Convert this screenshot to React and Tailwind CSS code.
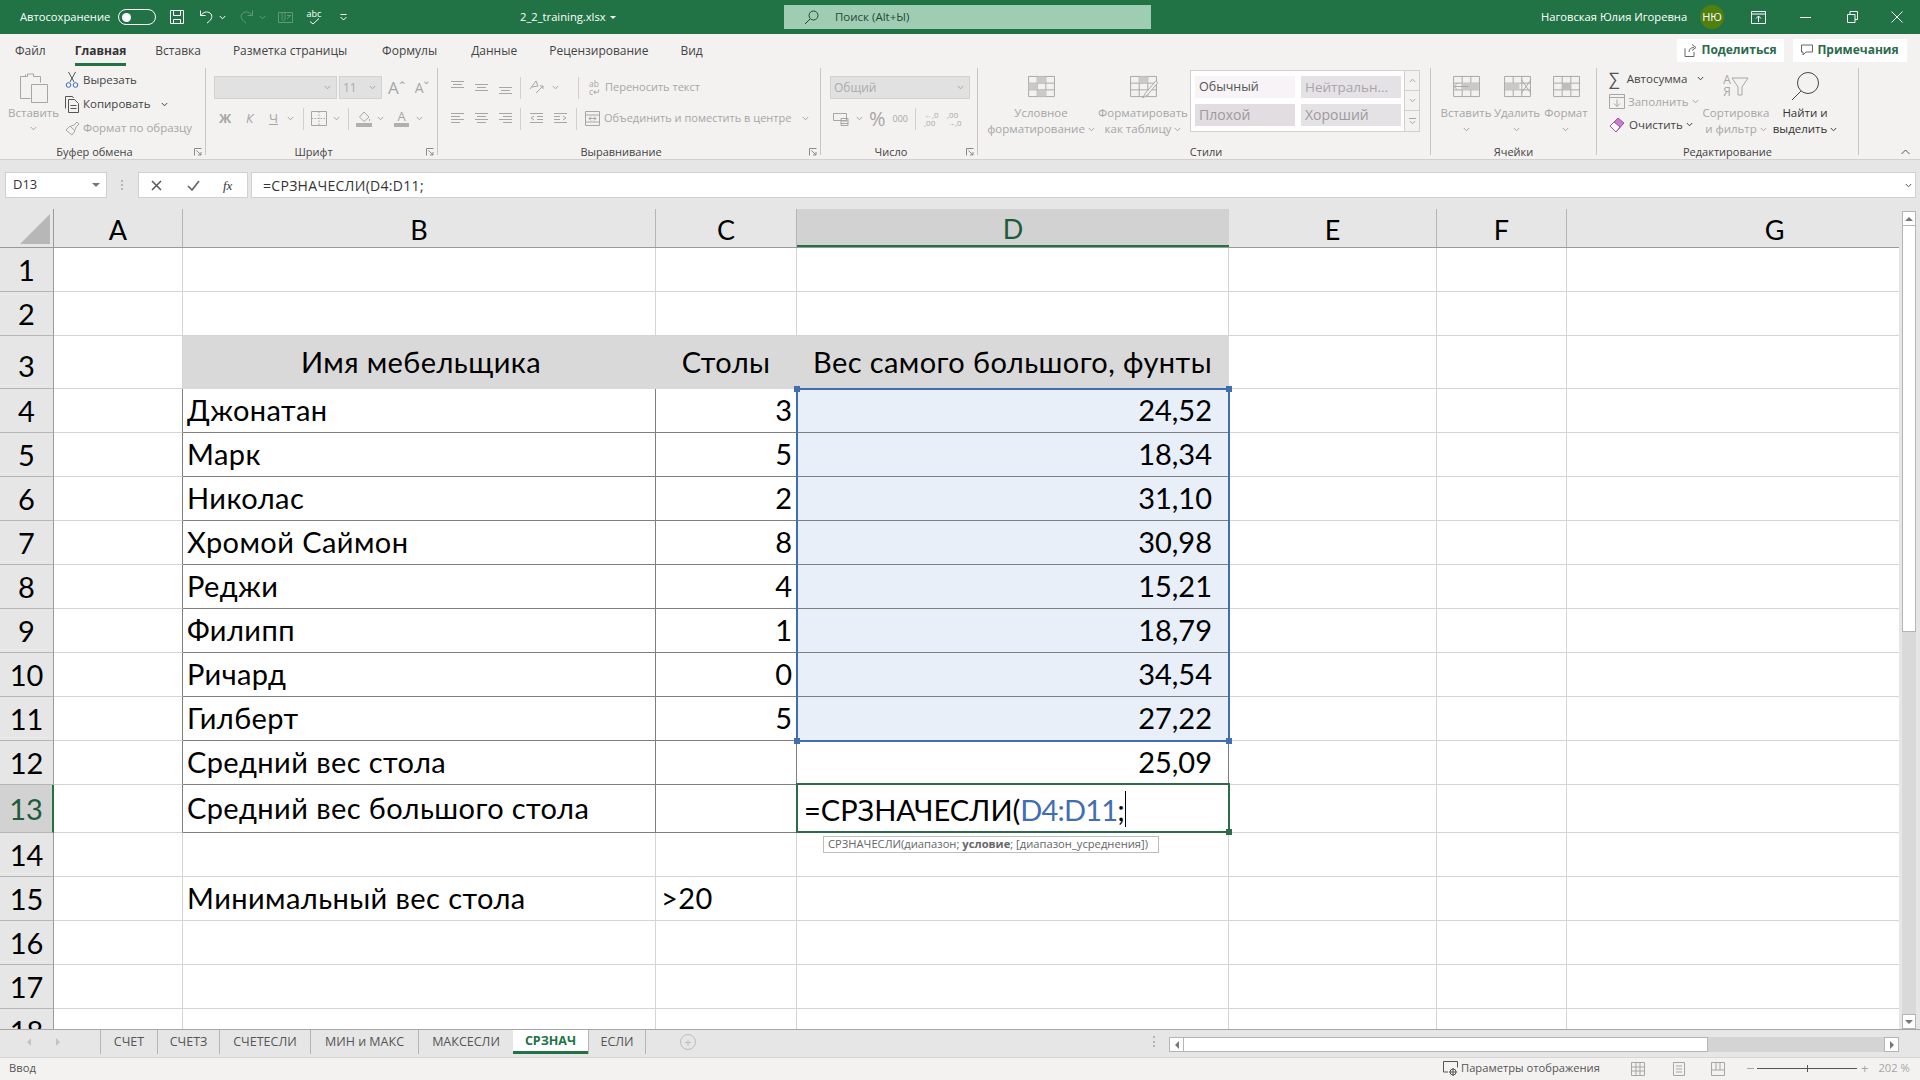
import React from "react";

const tabs = ["Файл", "Главная", "Вставка", "Разметка страницы", "Формулы", "Данные", "Рецензирование", "Вид"];
const tabGaps = ["ml-[15px]", "ml-[29px]", "ml-[29px]", "ml-[32px]", "ml-[35px]", "ml-[34px]", "ml-[32px]", "ml-[32px]"];

const rows = [
  { n: "1", h: "h-[44px]" },
  { n: "2", h: "h-[44px]" },
  { n: "3", h: "h-[53px]", head: true, b: "Имя мебельщика", c: "Столы", d: "Вес самого большого, фунты" },
  { n: "4", h: "h-[44px]", table: true, sel: true, b: "Джонатан", c: "3", d: "24,52" },
  { n: "5", h: "h-[44px]", table: true, sel: true, b: "Марк", c: "5", d: "18,34" },
  { n: "6", h: "h-[44px]", table: true, sel: true, b: "Николас", c: "2", d: "31,10" },
  { n: "7", h: "h-[44px]", table: true, sel: true, b: "Хромой Саймон", c: "8", d: "30,98" },
  { n: "8", h: "h-[44px]", table: true, sel: true, b: "Реджи", c: "4", d: "15,21" },
  { n: "9", h: "h-[44px]", table: true, sel: true, b: "Филипп", c: "1", d: "18,79" },
  { n: "10", h: "h-[44px]", table: true, sel: true, b: "Ричард", c: "0", d: "34,54" },
  { n: "11", h: "h-[44px]", table: true, sel: true, b: "Гилберт", c: "5", d: "27,22" },
  { n: "12", h: "h-[44px]", table: true, b: "Средний вес стола", d: "25,09" },
  { n: "13", h: "h-[48px]", table: true, active: true, b: "Средний вес большого стола" },
  { n: "14", h: "h-[44px]" },
  { n: "15", h: "h-[44px]", b: "Минимальный вес стола", cl: ">20" },
  { n: "16", h: "h-[44px]" },
  { n: "17", h: "h-[44px]" },
  { n: "18", h: "h-[44px]" },
];

const sheetTabs = [
  { t: "СЧЕТ", w: "w-[57px]" },
  { t: "СЧЕТЗ", w: "w-[62px]" },
  { t: "СЧЕТЕСЛИ", w: "w-[91px]" },
  { t: "МИН и МАКС", w: "w-[108px]" },
  { t: "МАКСЕСЛИ", w: "w-[95px]" },
  { t: "СРЗНАЧ", w: "w-[75px]", on: true },
  { t: "ЕСЛИ", w: "w-[57px]" },
];

function Ico({ w = 16, h = 16, vb, stroke = "#a6a6a6", className = "", children }) {
  return (
    <svg width={w} height={h} viewBox={vb || `0 0 ${w} ${h}`} fill="none" stroke={stroke} strokeWidth="1" className={`shrink-0 ${className}`}>
      {children}
    </svg>
  );
}

function Chev({ stroke = "#a6a6a6", className = "" }) {
  return (
    <Ico w={7} h={5} stroke={stroke} className={className}>
      <path d="M.8 1 3.5 3.8 6.2 1" />
    </Ico>
  );
}

function Group({ w, label, launcher, labelClass = "", children }) {
  return (
    <div className={`flex shrink-0 ${w}`}>
      <div className="flex min-w-0 flex-1 flex-col">
        <div className="h-[76px]">{children}</div>
        <div className={`relative h-[16px] text-center text-[11px] leading-[16px] text-[#444] ${labelClass} ${launcher ? "pr-[16px]" : ""}`}>
          {label}
          {launcher && (
            <Ico w={8} h={8} className="absolute right-[3px] top-[4px]" stroke="#8a8a8a">
              <path d="M.5 7.5v-7h7M2.5 2.5l4.5 4.5M7 4v3H4" />
            </Ico>
          )}
        </div>
      </div>
      <div className="h-[87px] w-px bg-[#c8c6c4]" />
    </div>
  );
}

function VSep({ className = "" }) {
  return <div className={`h-[22px] w-px bg-[#d2d0ce] ${className}`} />;
}

function Select({ w, text, className = "" }) {
  return (
    <div className={`flex h-[23px] items-center justify-between border border-[#d2d2d2] bg-[#e1e1e1] pl-[3px] pr-[5px] text-[12px] text-[#ababab] ${w} ${className}`}>
      <span>{text}</span>
      <Chev />
    </div>
  );
}

function AlignIcon({ kind }) {
  const lines = {
    top: "M1 1.5h13M3 4.5h9M1 7.5h13",
    mid: "M1 4.5h13M3 7.5h9M1 10.5h13",
    bot: "M1 7.5h13M3 10.5h9M1 13.5h13",
    left: "M1 2.5h13M1 5.5h9M1 8.5h13M1 11.5h9",
    center: "M1 2.5h13M3 5.5h9M1 8.5h13M3 11.5h9",
    right: "M1 2.5h13M5 5.5h9M1 8.5h13M5 11.5h9",
  };
  return (
    <Ico w={15} h={15}>
      <path d={lines[kind]} />
    </Ico>
  );
}

function GridIcon({ children }) {
  return (
    <Ico w={29} h={23} vb="0 0 30 24">
      <path d="M1.5 1.5h27v21h-27zM1.5 8.5h27M1.5 15.5h27M10.5 1.5v21M19.5 1.5v21" />
      {children}
    </Ico>
  );
}

function BigButton({ className = "", lines, dark, icon, chevBelow }) {
  const c = dark ? "text-[#333]" : "text-[#a6a6a6]";
  return (
    <div className={`flex shrink-0 flex-col items-center ${className}`}>
      <div className="flex h-[26px] items-center justify-center">{icon}</div>
      <div className={`mt-[6px] text-center text-[11.5px] leading-[16px] whitespace-nowrap ${c}`}>
        <div>{lines[0]}</div>
        {lines[1] !== undefined && (
          <div className="flex items-center justify-center gap-[3px]">
            {lines[1]}
            <Chev stroke={dark ? "#444" : "#a6a6a6"} />
          </div>
        )}
        {chevBelow && (
          <div className="flex h-[16px] items-center justify-center">
            <Chev />
          </div>
        )}
      </div>
    </div>
  );
}

function TitleBar() {
  return (
    <div className="flex h-[34px] items-center bg-[#217346] text-[11.2px] text-white">
      <span className="ml-[20px] w-[98px]">Автосохранение</span>
      <div className="flex h-[16px] w-[38px] items-center rounded-full border border-white pl-[3px]">
        <div className="h-[9px] w-[9px] rounded-full bg-white" />
      </div>
      <Ico w={16} h={16} stroke="#fff" className="ml-[13px]">
        <path d="M1.5 1.5h13v13h-13zM4.5 1.5v5h7v-5M4.5 14.5v-4h7v4" />
      </Ico>
      <Ico w={15} h={16} stroke="#fff" className="ml-[14px]">
        <path d="M1.5 1.5v5h5M2 6.5c2-3.5 6-4.5 9-2.5 3 2.3 2.5 6.5-3 10" />
      </Ico>
      <Chev stroke="#fff" className="ml-[5px]" />
      <Ico w={15} h={16} stroke="#5f9b7b" className="ml-[13px]">
        <path d="M13.5 1.5v5h-5M13 6.5c-2-3.5-6-4.5-9-2.5-3 2.3-2.5 6.5 3 10" />
      </Ico>
      <Chev stroke="#5f9b7b" className="ml-[5px]" />
      <Ico w={15} h={14} stroke="#5f9b7b" className="ml-[12px]">
        <path d="M.5 2.5h14v10H.5zM4 2.5v6c0 3 3 3 3 0v-6M9 5.5h4M9 9l4-4" />
      </Ico>
      <div className="ml-[14px] flex w-[14px] flex-col items-center text-[9px] leading-[9px]">
        <span>abc</span>
        <Ico w={11} h={7} stroke="#fff">
          <path d="M1 3.5 4 6l6-5.5" />
        </Ico>
      </div>
      <Ico w={7} h={8} stroke="#fff" className="ml-[19px]">
        <path d="M.5 1.5h6M.5 4l3 3 3-3" />
      </Ico>
      <span className="ml-[173px] w-[84px] whitespace-nowrap">2_2_training.xlsx</span>
      <div className="ml-[6px] h-0 w-0 border-x-[3px] border-t-[3px] border-x-transparent border-t-white" />
      <div className="ml-[168px] flex h-[24px] w-[367px] items-center bg-[#9fcdb3] pl-[20px] text-[11.5px] text-[#1f4a33]">
        <Ico w={15} h={15} stroke="#1f4a33">
          <circle cx="9.5" cy="5.5" r="4.5" />
          <path d="M6 9 1 14" />
        </Ico>
        <span className="ml-[16px]">Поиск (Alt+Ы)</span>
      </div>
      <span className="ml-[390px] w-[148px] whitespace-nowrap">Наговская Юлия Игоревна</span>
      <div className="ml-[11px] flex h-[24px] w-[24px] items-center justify-center rounded-full bg-[#52800f] text-[11px]">НЮ</div>
      <Ico w={15} h={13} stroke="#fff" className="ml-[27px]">
        <path d="M.5 .5h14v12H.5zM.5 3h14M7.5 11V5M5 7.5l2.5-2.5L10 7.5" />
      </Ico>
      <div className="ml-[34px] h-px w-[11px] bg-white" />
      <Ico w={11} h={12} stroke="#fff" className="ml-[36px]">
        <path d="M.5 3.5h7.5v8H.5zM3 3.5V.5h7.5v8H8" />
      </Ico>
      <Ico w={12} h={12} stroke="#fff" className="ml-[33px]">
        <path d="M.5 .5l11 11M11.5 .5l-11 11" />
      </Ico>
    </div>
  );
}

function TabsRow() {
  return (
    <div className="flex h-[34px] items-center text-[12px] text-[#444]">
      {tabs.map((t, i) => (
        <div key={t} className={`relative mt-[-1px] flex h-[29px] items-center whitespace-nowrap ${tabGaps[i]} ${t === "Главная" ? "font-bold text-[#333]" : ""}`}>
          {t}
          {t === "Главная" && <div className="absolute bottom-[-1px] left-0 h-[3px] w-full bg-[#217346]" />}
        </div>
      ))}
      <div className="ml-auto mr-[13px] flex items-center gap-[9px] pb-[2px] font-bold text-[#2b6a4a]">
        <div className="flex h-[23px] w-[107px] items-center justify-center gap-[4px] bg-white">
          <Ico w={13} h={13} stroke="#666">
            <path d="M1 4.5v8h9V8M5 8c0-3 2-4.5 5-4.5M8 .5l4 3-4 3" />
          </Ico>
          Поделиться
        </div>
        <div className="flex h-[23px] w-[114px] items-center justify-center gap-[4px] bg-white">
          <Ico w={12} h={12} stroke="#666">
            <path d="M.5 1h11v7H5L2 11V8H.5z" />
          </Ico>
          Примечания
        </div>
      </div>
    </div>
  );
}

function Ribbon() {
  return (
    <div className="h-[126px] border-b border-[#d0d0d0] bg-[#f3f2f1]">
      <TabsRow />
      <div className="flex text-[11.5px] text-[#a6a6a6]">
        <Group w="w-[206px]" label="Буфер обмена" launcher>
          <div className="flex">
            <div className="flex w-[65px] flex-col items-center pl-[2px] pt-[4px] text-[11.5px]">
              <Ico w={30} h={31}>
                <path d="M1.5 4.5h7V2h6v2.5h7v6M6.5 2.5v2M1.5 4.5v22h10" />
                <path d="M12.5 12.5h16v18h-16z" fill="#f3f2f1" />
              </Ico>
              <span className="mt-[2px] leading-[16px]">Вставить</span>
              <Chev className="mt-[5px]" />
            </div>
            <div className="flex flex-col">
              <div className="flex h-[24px] items-center text-[#444]">
                <Ico w={14} h={18} stroke="#555" className="mr-[4px]">
                  <path d="M3.5 1 9 11M10.5 1 5 11" />
                  <circle cx="3.5" cy="14" r="2.3" stroke="#2f6fb7" />
                  <circle cx="10.5" cy="14" r="2.3" stroke="#2f6fb7" />
                </Ico>
                Вырезать
              </div>
              <div className="flex h-[24px] items-center text-[#444]">
                <Ico w={14} h={17} stroke="#555" className="mr-[4px]">
                  <path d="M.5 12.5v-12h7l1 1.5M3.5 3.5h6l4 4v9h-10zM5.5 9.5h6M5.5 12.5h6" />
                </Ico>
                Копировать
                <Chev stroke="#444" className="ml-[10px]" />
              </div>
              <div className="flex h-[24px] items-center">
                <Ico w={15} h={15} className="mr-[3px]">
                  <path d="M1 9 7 14 10 10 5 5zM6 5l3-1 3-3 2 2-3 3-1 3" />
                </Ico>
                Формат по образцу
              </div>
            </div>
          </div>
        </Group>

        <Group w="w-[232px]" label="Шрифт" launcher>
          <div className="pl-[8px] pt-[8px]">
            <div className="flex h-[23px] items-center">
              <Select w="w-[123px]" text="" />
              <Select w="w-[43px]" text="11" className="ml-[2px]" />
              <span className="ml-[6px] text-[17px] leading-none">Aˆ</span>
              <span className="ml-[9px] text-[14px] leading-none">Aˇ</span>
            </div>
            <div className="mt-[8px] flex h-[23px] items-center pl-[5px] text-[13px]">
              <span className="w-[14px] font-bold">Ж</span>
              <span className="ml-[13px] w-[7px] italic">К</span>
              <span className="ml-[16px] w-[10px] underline">Ч</span>
              <Chev className="ml-[8px]" />
              <VSep className="ml-[9px]" />
              <Ico w={16} h={15} className="ml-[7px]">
                <path d="M.5 .5h15v14H.5z" />
                <path d="M8 .5v14M.5 7.5h15" strokeDasharray="1.5 1.5" />
              </Ico>
              <Chev className="ml-[6px]" />
              <VSep className="ml-[8px]" />
              <div className="ml-[7px] flex w-[16px] flex-col items-center">
                <Ico w={13} h={11}>
                  <path d="M6 1 1.5 6 6 10.5 11 6zM11.5 8v2" />
                </Ico>
                <div className="mt-[1px] h-[4px] w-[16px] bg-[#b0b0b0]" />
              </div>
              <Chev className="ml-[5px]" />
              <div className="ml-[10px] flex w-[15px] flex-col items-center text-[13px] leading-[12px]">
                A
                <div className="mt-[1px] h-[4px] w-[15px] bg-[#b0b0b0]" />
              </div>
              <Chev className="ml-[7px]" />
            </div>
          </div>
        </Group>

        <Group w="w-[383px]" label="Выравнивание" launcher>
          <div className="pl-[12px] pt-[8px] text-[11px]">
            <div className="flex h-[23px] items-center">
              <AlignIcon kind="top" />
              <div className="ml-[9px]"><AlignIcon kind="mid" /></div>
              <div className="ml-[9px]"><AlignIcon kind="bot" /></div>
              <VSep className="ml-[7px]" />
              <Ico w={16} h={15} className="ml-[8px]">
                <path d="M1 9 7 1l2 5-6 1M7 13l7-7M11 6h3v3" />
              </Ico>
              <Chev className="ml-[7px]" />
              <VSep className="ml-[19px]" />
              <div className="ml-[10px] flex w-[13px] flex-col text-[8.5px] leading-[8px]">
                <span>ab</span>
                <span>c↵</span>
              </div>
              <span className="ml-[3px] whitespace-nowrap">Переносить текст</span>
            </div>
            <div className="mt-[8px] flex h-[23px] items-center">
              <AlignIcon kind="left" />
              <div className="ml-[9px]"><AlignIcon kind="center" /></div>
              <div className="ml-[9px]"><AlignIcon kind="right" /></div>
              <VSep className="ml-[7px]" />
              <Ico w={15} h={13} className="ml-[8px]">
                <path d="M1 1.5h13M8 4.5h6M8 7.5h6M1 10.5h13M5 4 2 6l3 2" />
              </Ico>
              <Ico w={15} h={13} className="ml-[9px]">
                <path d="M1 1.5h13M1 4.5h6M1 7.5h6M1 10.5h13M10 4l3 2-3 2" />
              </Ico>
              <VSep className="ml-[8px]" />
              <Ico w={15} h={15} className="ml-[8px]">
                <path d="M.5 .5h14v14H.5zM.5 4h14M.5 11h14M4 7.5h7M4 7.5l2-2M4 7.5l2 2M11 7.5l-2-2M11 7.5l-2 2" />
              </Ico>
              <span className="ml-[4px] whitespace-nowrap">Объединить и поместить в центре</span>
              <Chev className="ml-[11px]" />
            </div>
          </div>
        </Group>

        <Group w="w-[157px]" label="Число" launcher>
          <div className="pl-[9px] pt-[8px]">
            <Select w="w-[140px]" text="Общий" />
            <div className="mt-[8px] flex h-[23px] items-center pl-[3px]">
              <Ico w={16} h={15}>
                <path d="M.5 2.5h13v7H.5zM8 7.5h7v7H8zM8 10h7M8 12.5h7" />
              </Ico>
              <Chev className="ml-[7px]" />
              <span className="ml-[6px] text-[20px] leading-none">%</span>
              <span className="ml-[7px] text-[9px]">000</span>
              <VSep className="ml-[7px]" />
              <span className="ml-[8px] w-[15px] text-[8px] leading-[8px]">←,0<br />,00</span>
              <span className="ml-[8px] w-[16px] text-[8px] leading-[8px]">,00<br />→,0</span>
            </div>
          </div>
        </Group>

        <Group w="w-[453px]" label="Стили" labelClass="pl-[4px]">
          <div className="flex">
            <BigButton
              className="ml-[7px] mt-[5px] w-[112px]"
              lines={["Условное", "форматирование"]}
              icon={
                <GridIcon>
                  <path d="M10.5 1.5h9v7h-9zM1.5 8.5h9v7h-9zM19.5 15.5h-9v7h9z" fill="#c9c9c9" stroke="none" />
                </GridIcon>
              }
            />
            <BigButton
              className="mt-[5px] w-[92px]"
              lines={["Форматировать", "как таблицу"]}
              icon={
                <GridIcon>
                  <path d="M10.5 1.5h9v7h-9z" fill="#c9c9c9" stroke="none" />
                  <path d="M28 6 17 19l-3 5 5-3L30 8z" fill="#f3f2f1" />
                </GridIcon>
              }
            />
            <div className="ml-[1px] mt-[2px] flex h-[62px] w-[230px] border border-[#d2d0ce] bg-white">
              <div className="grid flex-1 grid-cols-[100px_100px] grid-rows-[22px_22px] gap-x-[6px] gap-y-[6px] pl-[4px] pt-[5px]">
                <div className="flex items-center bg-[#f7f3f6] pl-[4px] text-[12.5px] text-[#555]">Обычный</div>
                <div className="flex items-center bg-[#e5e2e6] pl-[4px] text-[13.5px] text-[#a9a5ab]">Нейтральн...</div>
                <div className="flex items-center bg-[#e1dde1] pb-[2px] pl-[4px] text-[14px] text-[#9c9a9c]">Плохой</div>
                <div className="flex items-center bg-[#e5e2e6] pb-[2px] pl-[4px] text-[14px] text-[#9c9a9c]">Хороший</div>
              </div>
              <div className="flex w-[15px] flex-col border-l border-[#d2d0ce] bg-[#f3f2f1]">
                <div className="flex h-[20px] items-center justify-center border-b border-[#d2d0ce]">
                  <Chev className="rotate-180" />
                </div>
                <div className="flex h-[20px] items-center justify-center border-b border-[#d2d0ce]">
                  <Chev />
                </div>
                <div className="flex flex-1 flex-col items-center justify-center">
                  <div className="mb-[1px] h-px w-[7px] bg-[#a6a6a6]" />
                  <Chev />
                </div>
              </div>
            </div>
          </div>
        </Group>

        <Group w="w-[166px]" label="Ячейки">
          <div className="flex pl-[11px] pt-[5px]">
            <BigButton
              className="w-[48px]"
              lines={["Вставить"]}
              chevBelow
              icon={
                <GridIcon>
                  <path d="M10 8.5h18v7H10z" fill="#c9c9c9" stroke="none" />
                  <path d="M17 12H2M6 8l-4 4 4 4" fill="#f3f2f1" />
                </GridIcon>
              }
            />
            <BigButton
              className="ml-[2px] w-[50px]"
              lines={["Удалить"]}
              chevBelow
              icon={
                <GridIcon>
                  <path d="M2 8.5h15v7H2z" fill="#c9c9c9" stroke="none" />
                  <path d="m19 5 10 14M29 5 19 19" />
                </GridIcon>
              }
            />
            <BigButton
              className="w-[48px]"
              lines={["Формат"]}
              chevBelow
              icon={
                <GridIcon>
                  <path d="M10.5 8.5h9v7h-9z" fill="#bdbdbd" stroke="none" />
                </GridIcon>
              }
            />
          </div>
        </Group>

        <Group w="w-[262px]" label="Редактирование">
          <div className="flex">
            <div className="mt-[-1px] w-[104px] pl-[12px]">
              <div className="flex h-[23px] items-center text-[#444]">
                <span className="mr-[7px] w-[12px] text-[17px] leading-none text-[#555]">∑</span>
                Автосумма
                <Chev stroke="#444" className="ml-[10px]" />
              </div>
              <div className="flex h-[23px] items-center">
                <Ico w={16} h={15} className="mr-[3px]">
                  <path d="M.5 .5h15v14H.5zM.5 3.5h15M8 5.5v7M5 9.5l3 3 3-3" />
                </Ico>
                Заполнить
                <Chev className="ml-[3px]" />
              </div>
              <div className="flex h-[23px] items-center text-[#444]">
                <Ico w={16} h={18} stroke="#a24fa8" className="mr-[4px]">
                  <path d="M1 10 9 2l6 5-8 9z" fill="#c67fcb" />
                  <path d="M1 10 5 6l6 5-4 5z" fill="#fff" />
                </Ico>
                Очистить
                <Chev stroke="#444" className="ml-[3px]" />
              </div>
            </div>
            <BigButton
              className="mt-[5px] w-[70px]"
              lines={["Сортировка", "и фильтр"]}
              icon={
                <div className="flex items-center">
                  <div className="flex flex-col text-[12px] leading-[12px]">
                    <span>А</span>
                    <span>Я</span>
                  </div>
                  <Ico w={18} h={22}>
                    <path d="M1 3h16l-6 9v8H7v-8z" />
                  </Ico>
                </div>
              }
            />
            <BigButton
              className="ml-[1px] mt-[5px] w-[66px]"
              dark
              lines={["Найти и", "выделить"]}
              icon={
                <Ico w={30} h={30} stroke="#444">
                  <circle cx="18" cy="12" r="10.5" />
                  <path d="M11 20 2 29" />
                </Ico>
              }
            />
          </div>
        </Group>

        <div className="relative flex-1">
          <Ico w={9} h={6} stroke="#555" className="absolute right-[10px] top-[81px]">
            <path d="M.5 5 4.5 1l4 4" />
          </Ico>
        </div>
      </div>
    </div>
  );
}

function FormulaBar() {
  return (
    <div className="flex h-[48px] items-start bg-[#e6e6e6] pl-[5px] pt-[12px] text-[13px] text-[#333]">
      <div className="flex h-[26px] w-[102px] items-center justify-between border border-[#d0d0d0] bg-white pl-[7px] pr-[6px]">
        D13
        <div className="h-0 w-0 border-x-[4px] border-t-[4px] border-x-transparent border-t-[#777]" />
      </div>
      <div className="ml-[14px] mt-[8px] flex h-[10px] w-[2px] flex-col justify-between">
        <div className="h-[2px] bg-[#b5b5b5]" />
        <div className="h-[2px] bg-[#b5b5b5]" />
        <div className="h-[2px] bg-[#b5b5b5]" />
      </div>
      <div className="ml-[15px] flex h-[26px] w-[110px] items-center border border-[#d0d0d0] bg-white">
        <Ico w={11} h={11} stroke="#555" className="ml-[12px]">
          <path d="M1 1l9 9M10 1l-9 9" strokeWidth="1.5" />
        </Ico>
        <Ico w={13} h={11} stroke="#666" className="ml-[25px]">
          <path d="M1 6l4 4 7-9" strokeWidth="1.7" />
        </Ico>
        <span className="ml-[23px] font-['Liberation_Serif',serif] text-[13px] italic leading-none">fx</span>
      </div>
      <div className="ml-[3px] flex h-[26px] w-[1665px] items-center border border-[#d0d0d0] bg-white pl-[11px] text-[14px] tracking-[0.3px]">
        =СРЗНАЧЕСЛИ(D4:D11;
        <Chev stroke="#555" className="ml-auto mr-[3px]" />
      </div>
    </div>
  );
}

function ColHeader({ w, label, on }) {
  return (
    <div
      className={`flex h-[38px] shrink-0 items-center justify-center pt-[2px] text-[27px] leading-none ${w} ${
        on ? "border-b-2 border-[#217346] bg-[#d2d2d2] text-[#1d5b3c]" : "border-r border-[#b5b5b5] text-black"
      }`}
    >
      {label}
    </div>
  );
}

function Cell({ className = "", children }) {
  return <div className={`flex items-center overflow-hidden whitespace-nowrap ${className}`}>{children}</div>;
}

function SheetRow({ row }) {
  const line = row.table ? "border-[#7f7f7f]" : "border-[#d4d4d4]";
  const headBg = row.head ? "bg-[#d9d9d9] border-[#d9d9d9]" : line;
  let cAlign = "justify-end pr-[4px]";
  if (row.head) cAlign = "justify-center tracking-[0.4px]";
  if (row.cl) cAlign = "justify-start pl-[5px] tracking-[0.4px]";
  return (
    <div className={`grid shrink-0 grid-cols-[54px_129px_473px_141px_432px_208px_130px_333px] text-[29px] leading-none text-black ${row.h}`}>
      <Cell
        className={`justify-center border-b border-b-[#b5b5b5] ${
          row.active ? "border-r-2 border-r-[#217346] bg-[#d2d2d2] text-[#1d5b3c]" : "border-r border-r-[#9a9a9a] bg-[#e6e6e6]"
        } ${row.head ? "pt-[7px]" : ""}`}
      >
        {row.n}
      </Cell>
      <Cell className={`border-b border-r border-[#d4d4d4] ${row.table ? "border-r-[#7f7f7f]" : ""}`} />
      <Cell className={`border-b border-r pb-[2px] pl-[4px] tracking-[0.42px] ${row.head ? "justify-center" : ""} ${headBg}`}>{row.b}</Cell>
      <Cell className={`border-b border-r pb-[2px] ${cAlign} ${headBg}`}>{row.c || row.cl}</Cell>
      <Cell className={`border-b border-r pb-[2px] ${row.head ? "justify-center tracking-[0.42px]" : "justify-end pr-[16px]"} ${row.sel ? "bg-[#e8eff9]" : ""} ${headBg}`}>{row.d}</Cell>
      <Cell className="border-b border-r border-[#d4d4d4]" />
      <Cell className="border-b border-r border-[#d4d4d4]" />
      <Cell className="border-b border-[#d4d4d4]" />
    </div>
  );
}

function Sheet() {
  return (
    <div className="flex h-[821px] bg-[#e6e6e6]">
      <div className="relative h-full w-[1899px] shrink-0 overflow-hidden bg-white font-['Lato','Noto_Sans',sans-serif]">
        <div className="flex h-[40px] border-b border-[#9a9a9a] bg-[#e6e6e6] pt-[1px]">
          <div className="flex h-[38px] w-[54px] shrink-0 items-end justify-end border-r border-[#9a9a9a] pb-[3px] pr-[3px]">
            <div className="h-0 w-0 border-b-[30px] border-l-[30px] border-b-[#b7b7b7] border-l-transparent" />
          </div>
          <ColHeader w="w-[129px]" label="A" />
          <ColHeader w="w-[473px]" label="B" />
          <ColHeader w="w-[141px]" label="C" />
          <ColHeader w="w-[432px]" label="D" on />
          <ColHeader w="w-[208px]" label="E" />
          <ColHeader w="w-[130px]" label="F" />
          <ColHeader w="w-[416px]" label="G" />
        </div>
        {rows.map((r) => (
          <SheetRow key={r.n} row={r} />
        ))}

        {/* range highlight */}
        <div className="absolute left-[796px] top-[180px] h-[354px] w-[434px] border-2 border-[#3f6fb1]">
          <div className="absolute -left-[4px] -top-[4px] h-[6px] w-[6px] bg-[#3f6fb1]" />
          <div className="absolute -right-[4px] -top-[4px] h-[6px] w-[6px] bg-[#3f6fb1]" />
          <div className="absolute -bottom-[4px] -left-[4px] h-[6px] w-[6px] bg-[#3f6fb1]" />
          <div className="absolute -bottom-[4px] -right-[4px] h-[6px] w-[6px] bg-[#3f6fb1]" />
        </div>

        {/* editing cell */}
        <div className="absolute left-[796px] top-[575px] flex h-[50px] w-[434px] items-center border-2 border-[#2f6b4a] bg-white pl-[6px] pt-[2px] text-[29px] leading-none text-black">
          =СРЗНАЧЕСЛИ(<span className="tracking-[-0.8px] text-[#3f6fb1]">D4:D11</span>;
          <div className="h-[36px] w-px bg-black" />
          <div className="absolute -bottom-[4px] -right-[4px] h-[6px] w-[6px] bg-[#2f6b4a]" />
        </div>

        {/* function hint */}
        <div className="absolute left-[823px] top-[628px] flex h-[17px] w-[336px] items-center whitespace-nowrap border border-[#bdbdbd] bg-white pl-[4px] font-['Open_Sans',sans-serif] text-[11.2px] text-[#666]">
          <span>СРЗНАЧЕСЛИ(диапазон; <b>условие</b>; [диапазон_усреднения])</span>
        </div>
      </div>

      <div className="flex h-full flex-1 flex-col bg-[#e6e6e6] pl-[3px] pr-[4px] pt-[3px]">
        <div className="flex h-[15px] items-center justify-center border border-[#b5b5b5] bg-white">
          <div className="h-0 w-0 border-x-[4px] border-b-[4px] border-x-transparent border-b-[#777]" />
        </div>
        <div className="h-[406px] border-x border-b border-[#b5b5b5] bg-white" />
        <div className="flex-1 bg-[#d9d9d9]" />
        <div className="flex h-[15px] items-center justify-center border border-[#b5b5b5] bg-white">
          <div className="h-0 w-0 border-x-[4px] border-t-[4px] border-x-transparent border-t-[#777]" />
        </div>
      </div>
    </div>
  );
}

function TabBar() {
  return (
    <div className="flex h-[28px] items-start border-t border-[#a6a6a6] bg-[#e6e6e6] text-[12.5px] text-[#555]">
      <div className="flex h-[24px] w-[100px] items-center pl-[27px]">
        <div className="h-0 w-0 border-y-[4px] border-r-[4px] border-y-transparent border-r-[#c4c4c4]" />
        <div className="ml-[25px] h-0 w-0 border-y-[4px] border-l-[4px] border-y-transparent border-l-[#c4c4c4]" />
      </div>
      {sheetTabs.map((s) => (
        <div
          key={s.t}
          className={`flex h-[24px] items-center justify-center whitespace-nowrap pt-[1px] ${s.w} ${
            s.on ? "border-b-[3px] border-[#217346] bg-white font-bold text-[#217346]" : "border-l border-[#b5b5b5]"
          }`}
        >
          {s.t}
        </div>
      ))}
      <div className="flex h-[24px] items-center border-l border-[#b5b5b5] pl-[34px]">
        <div className="flex h-[16px] w-[16px] items-center justify-center rounded-full border border-[#bdbdbd] text-[13px] leading-none text-[#bdbdbd]">+</div>
      </div>
      <div className="ml-[457px] mt-[6px] flex h-[11px] w-[2px] flex-col justify-between">
        <div className="h-[2px] bg-[#b5b5b5]" />
        <div className="h-[2px] bg-[#b5b5b5]" />
        <div className="h-[2px] bg-[#b5b5b5]" />
      </div>
      <div className="ml-[14px] mt-[7px] flex h-[15px] w-[730px] bg-[#d4d4d4]">
        <div className="flex w-[15px] items-center justify-center border border-[#b5b5b5] bg-white">
          <div className="h-0 w-0 border-y-[4px] border-r-[4px] border-y-transparent border-r-[#777]" />
        </div>
        <div className="w-[524px] border-y border-r border-[#b5b5b5] bg-white" />
        <div className="flex-1" />
        <div className="flex w-[15px] items-center justify-center border border-[#b5b5b5] bg-white">
          <div className="h-0 w-0 border-y-[4px] border-l-[4px] border-y-transparent border-l-[#777]" />
        </div>
      </div>
    </div>
  );
}

function StatusBar() {
  return (
    <div className="flex h-[23px] items-center border-t border-[#d6d6d6] bg-[#f3f2f1] pb-[1px] pl-[9px] text-[11.2px] text-[#555]">
      <span className="w-[1434px]">Ввод</span>
      <Ico w={16} h={16} stroke="#555">
        <path d="M5 11H.5V.5h14v6" />
        <circle cx="10" cy="11" r="3" />
        <path d="M10 7v8M6 11h8" />
      </Ico>
      <span className="ml-[2px] w-[170px] whitespace-nowrap">Параметры отображения</span>
      <Ico w={14} h={14}>
        <path d="M.5 .5h13v13H.5zM.5 5h13M.5 9h13M5 .5v13M9 .5v13" />
      </Ico>
      <Ico w={14} h={14} className="ml-[27px]">
        <path d="M1.5 .5h11v13h-11zM4 4h6M4 7h6M4 10h6" />
      </Ico>
      <Ico w={14} h={14} className="ml-[25px]">
        <path d="M.5 .5h13v13H.5zM.5 8h13M5 .5V8M9 .5V8" />
      </Ico>
      <div className="ml-[22px] h-px w-[7px] bg-[#a6a6a6]" />
      <div className="relative ml-[3px] h-px w-[100px] bg-[#555]">
        <div className="absolute left-[50px] top-[-3px] h-[7px] w-px bg-[#555]" />
      </div>
      <span className="ml-[4px] text-[13px] leading-none text-[#a6a6a6]">+</span>
      <span className="ml-[10px] whitespace-nowrap text-[#a6a6a6]">202 %</span>
    </div>
  );
}

export default function App() {
  return (
    <div className="h-[1080px] w-[1920px] overflow-hidden bg-[#f3f2f1] font-['Open_Sans','Noto_Sans',sans-serif]">
      <TitleBar />
      <Ribbon />
      <FormulaBar />
      <Sheet />
      <TabBar />
      <StatusBar />
    </div>
  );
}
